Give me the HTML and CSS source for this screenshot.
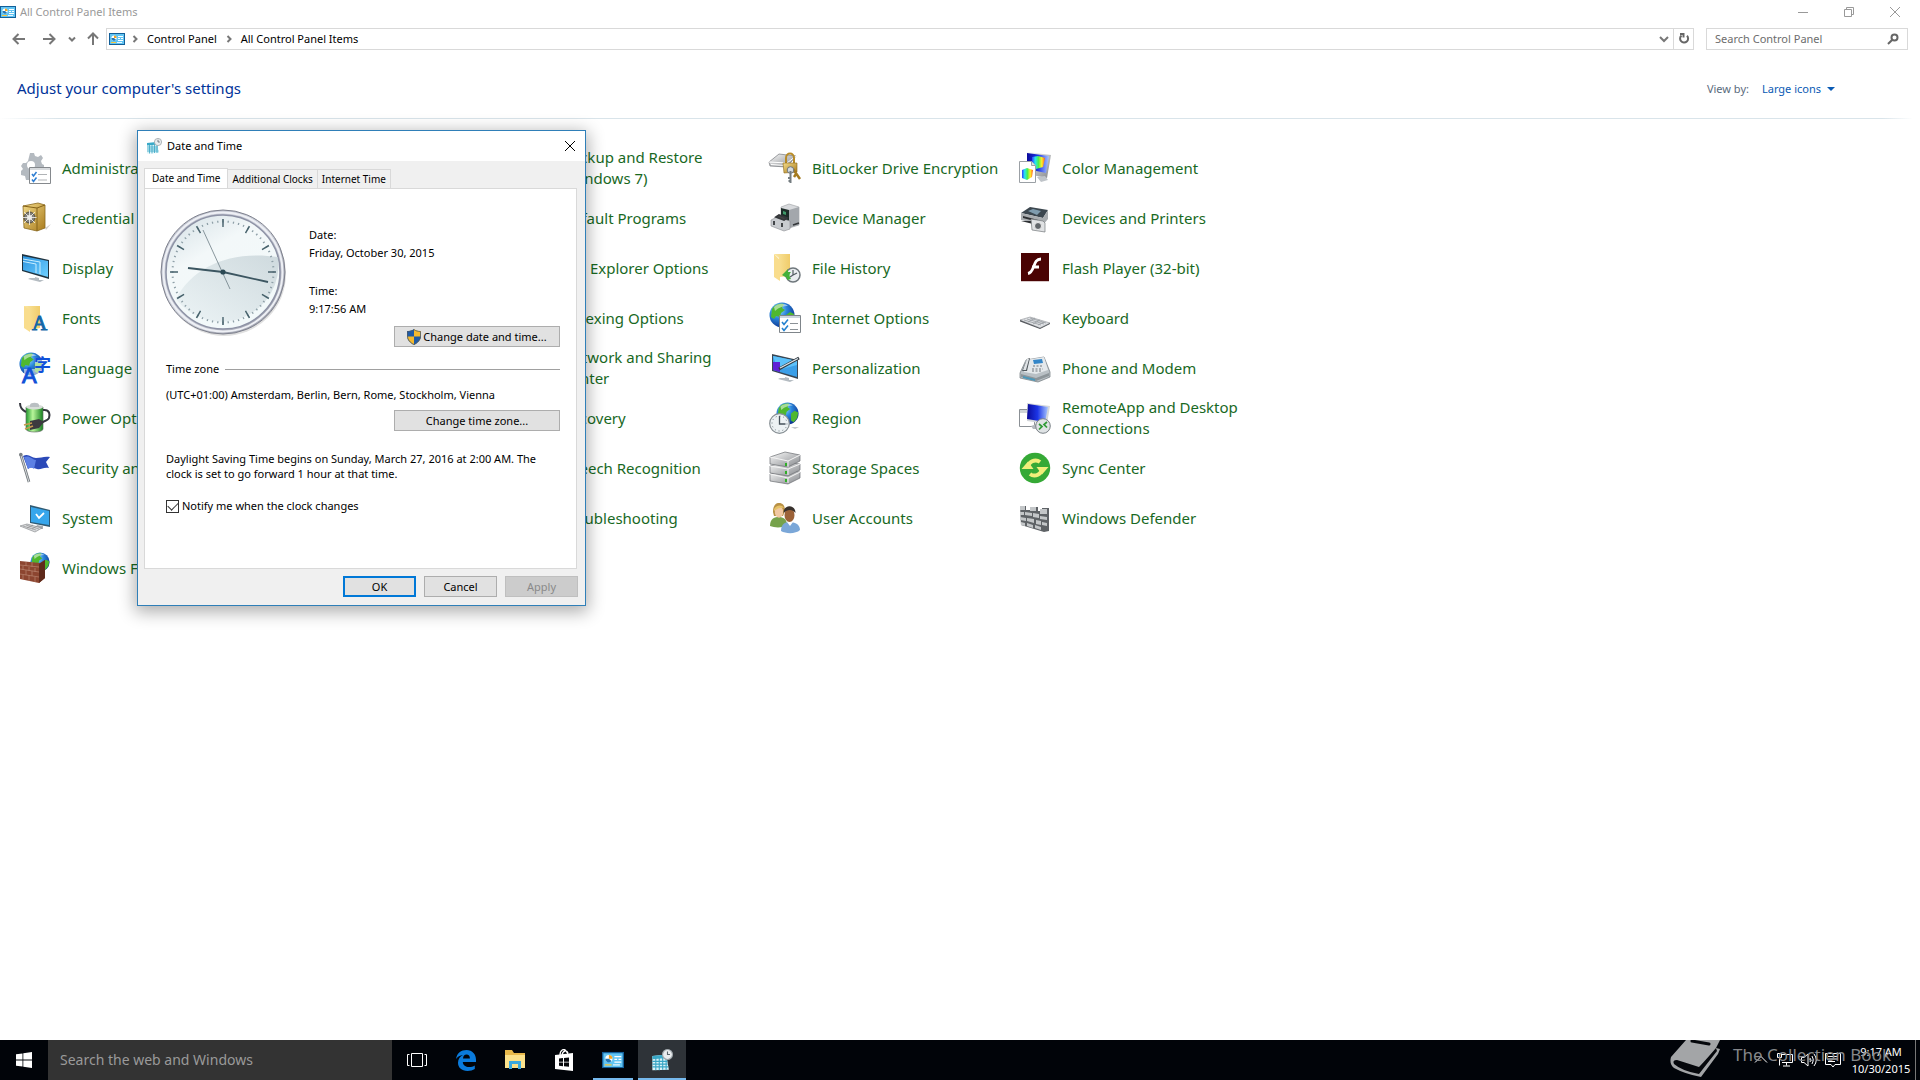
FILE: index.html
```html
<!DOCTYPE html>
<html lang="en">
<head>
<meta charset="utf-8">
<title>All Control Panel Items</title>
<link rel="stylesheet" href="styles.css">
</head>
<body>
<svg class="defs" aria-hidden="true">
  <defs>
    <radialGradient id="globe" cx="35%" cy="30%" r="75%"><stop offset="0" stop-color="#9fe4ff"/><stop offset=".45" stop-color="#2a86dc"/><stop offset="1" stop-color="#0b2f8c"/></radialGradient>
    <linearGradient id="screen" x1="0" y1="0" x2="1" y2="1"><stop offset="0" stop-color="#2b93e0"/><stop offset="1" stop-color="#6fd0ff"/></linearGradient>
    <linearGradient id="deep" x1="0" y1="0" x2="1" y2="0"><stop offset="0" stop-color="#0a0a9a"/><stop offset=".5" stop-color="#1c35e6"/><stop offset="1" stop-color="#a9c6ff"/></linearGradient>
    <linearGradient id="gold" x1="0" y1="0" x2="1" y2="1"><stop offset="0" stop-color="#f4dc8a"/><stop offset="1" stop-color="#a87a1c"/></linearGradient>
    <linearGradient id="folder" x1="0" y1="0" x2="1" y2="0"><stop offset="0" stop-color="#fbe7a3"/><stop offset="1" stop-color="#f0cc6a"/></linearGradient>
    <linearGradient id="silver" x1="0" y1="0" x2="1" y2="1"><stop offset="0" stop-color="#fafafa"/><stop offset="1" stop-color="#85888c"/></linearGradient>
    <linearGradient id="green" x1="0" y1="0" x2="1" y2="0"><stop offset="0" stop-color="#1f9a2c"/><stop offset=".4" stop-color="#b8f59a"/><stop offset="1" stop-color="#16801f"/></linearGradient>
    <linearGradient id="rainbow" x1="0" y1="0" x2="1" y2="0"><stop offset="0" stop-color="#2f3cff"/><stop offset=".25" stop-color="#28e6f0"/><stop offset=".5" stop-color="#4cf04c"/><stop offset=".75" stop-color="#fff02a"/><stop offset="1" stop-color="#ff5a1e"/></linearGradient>
    <linearGradient id="face" x1="0" y1="0" x2=".6" y2="1"><stop offset="0" stop-color="#d3dfe4"/><stop offset=".4" stop-color="#f3f8f9"/><stop offset="1" stop-color="#f2f9fa"/></linearGradient>
    <linearGradient id="shine" x1="0" y1="1" x2="1" y2="0"><stop offset="0" stop-color="#eaf2f4"/><stop offset="1" stop-color="#c3d0d5"/></linearGradient>
    <linearGradient id="rim" x1="0" y1="0" x2="1" y2="1"><stop offset="0" stop-color="#b9bdca"/><stop offset=".5" stop-color="#cfd2dc"/><stop offset="1" stop-color="#8f92a0"/></linearGradient>
    <symbol id="i-world" viewBox="0 0 26 26"><circle cx="13" cy="13" r="12.5" fill="url(#globe)"/><path d="M3 7c3-5 8-6 12-5l-2 4 3 2-4 3-1 4-4-1-2 3-3-2zM17 13l4-3 4 2-1 6-4 5-3-2z" fill="#4fb82e"/><path d="M5 5c4-4 11-4 14-1-4 0-9 1-13 5z" fill="#fff" opacity=".5"/></symbol>
    <symbol id="i-panel" viewBox="0 0 16 12"><path d="M0 0h16v12H0z" fill="#135f99"/><path d="M1 1h14v10H1z" fill="#62c5f3"/><circle cx="5" cy="5" r="2.6" fill="#fff"/><path d="M5 5V2.4A2.6 2.6 0 0 1 7.6 5z" fill="#f7a21b"/><path d="M5 5H2.4A2.6 2.6 0 0 0 7 6.800z" fill="#2477b5"/><path d="M9 3h5v1H9zM9 5h2v1H9zM12 5h2v1h-2zM9 7h5v1H9z" fill="#fff"/><path d="M2 9h5v1H2z" fill="#f7c53b"/><path d="M8 9h5v1H8z" fill="#e9f7ff"/></symbol>
    <symbol id="i-datetime" viewBox="0 0 16 16"><path d="M1 5l10-1 2 11-12 .5z" fill="#d9f3f8"/><path d="M1 5l10-1 .4 2.500L1 7.500z" fill="#3aa9c8"/><path d="M1 9h11M1 11h11M1 13h11.500M3.500 6v9.500M6 6v9.500M8.500 6v9M11 6v9" stroke="#38a5c4" stroke-width=".8"/><circle cx="12" cy="4" r="3.600" fill="#e9ecee" stroke="#9da5aa" stroke-width=".8"/><path d="M12 1.800V4h1.800" fill="none" stroke="#59636b" stroke-width=".8"/></symbol>
  </defs>
</svg>

<main class="window">
  <header class="titlebar">
    <svg class="mini" viewBox="0 0 16 12"><use href="#i-panel"/></svg>
    <span class="caption">All Control Panel Items</span>
    <div class="controls">
      <button aria-label="Minimize"><svg viewBox="0 0 12 12"><path d="M1 6.500h10"/></svg></button>
      <button aria-label="Restore"><svg viewBox="0 0 12 12"><path d="M1.500 3.500h7v7h-7zM3.500 3.500v-2h7v7h-2"/></svg></button>
      <button aria-label="Close"><svg viewBox="0 0 12 12"><path d="M1 1l10 10M11 1L1 11"/></svg></button>
    </div>
  </header>

  <nav class="navbar" aria-label="Address">
    <button class="nav-button" aria-label="Back"><svg viewBox="0 0 14 14"><path d="M13 7H2M6.500 2L1.500 7l5 5"/></svg></button>
    <button class="nav-button nav-forward" aria-label="Forward"><svg viewBox="0 0 14 14"><path d="M1 7h11M7.500 2l5 5-5 5"/></svg></button>
    <button class="nav-button nav-history" aria-label="Recent locations"><svg viewBox="0 0 14 14"><path d="M4 5.500l3 3 3-3"/></svg></button>
    <button class="nav-button nav-up" aria-label="Up"><svg viewBox="0 0 14 14"><path d="M7 13V2M2 6.500l5-5 5 5"/></svg></button>
    <div class="address">
      <svg class="mini" viewBox="0 0 16 12"><use href="#i-panel"/></svg>
      <svg class="sep" viewBox="0 0 6 8"><path d="M1.500 1l3 3-3 3"/></svg>
      <a href="#">Control Panel</a>
      <svg class="sep" viewBox="0 0 6 8"><path d="M1.500 1l3 3-3 3"/></svg>
      <a href="#">All Control Panel Items</a>
      <button class="address-drop" aria-label="Previous locations"><svg viewBox="0 0 10 10"><path d="M1 3l4 4 4-4"/></svg></button>
      <button class="refresh" aria-label="Refresh"><svg viewBox="0 0 12 12"><path d="M9 2.800A4 4 0 1 1 3.500 2.500M2 1h3.500v3.500"/></svg></button>
    </div>
    <label class="search">
      <input type="search" placeholder="Search Control Panel" aria-label="Search Control Panel">
      <svg viewBox="0 0 12 12"><circle cx="7.500" cy="4.500" r="3"/><path d="M5.300 6.700L1 11"/></svg>
    </label>
  </nav>

  <div class="heading">
    <h1>Adjust your computer's settings</h1>
    <div class="viewby"><span>View by:</span><button>Large icons<i class="caret"></i></button></div>
  </div>

  <div class="items">
    <a class="item" href="#"><svg viewBox="0 0 32 32"><path d="M11 1l4 0 1 3 3 1 3-2 2 3-2 3 1 3 2 1v4l-3 1-2 3 1 3-3 2-3-2-4 1-1 3H7l-1-4-4-1 0-4 2-2-2-3 2-3 3 0 2-2z" fill="#b4bac0"/><circle cx="12" cy="13" r="4" fill="#fff"/><path d="M10.500 15.500h21v16h-21z" fill="#fff" stroke="#85898d"/><path d="M11 16h20v2H11z" fill="#d8dbde"/><path d="M13 22l1.500 2 3-4M13 27.500l1.500 2 3-4" fill="none" stroke="#2d7dd2" stroke-width="1.500"/><path d="M19 22.500h9M19 28h9" stroke="#b0b3b6"/></svg><span>Administrative Tools</span></a>
    <a class="item" href="#"><i></i><span>Backup and Restore<br>(Windows 7)</span></a>
    <a class="item" href="#"><svg viewBox="0 0 32 32"><path d="M0 10l10-8 17 2-9 11L1 14z" fill="url(#silver)" stroke="#75787c" stroke-width=".7"/><path d="M0 10l18 1 9-7M2 12.500l14 1" stroke="#fff" fill="none"/><path d="M17 12V6c0-6 8-6 8 0v6" fill="none" stroke="#b88b27" stroke-width="2"/><path d="M14 11h14v9l-13 1z" fill="url(#gold)" stroke="#8b6718" stroke-width=".6"/><path d="M24 17l7 10M27 22l-2 3" stroke="#a57b20" stroke-width="2.500"/><circle cx="21.500" cy="18" r="3.300" fill="#d5dadd" stroke="#6e767a"/><path d="M21.500 19v12M21.500 26h-2.500M21.500 29h-2" stroke="#747c80" stroke-width="2"/></svg><span>BitLocker Drive Encryption</span></a>
    <a class="item" href="#"><svg viewBox="0 0 32 32"><path d="M8 0l24 3-4 23-20-4z" fill="url(#silver)"/><path d="M8 1l22 3-3 17-19-4z" fill="url(#deep)"/><path d="M13 5l6-1 7 2-2 9-7 2-4-2z" fill="url(#rainbow)"/><path d="M18 25l8-1 3 4-7 2z" fill="#bfc4c9"/><path d="M.5 9.500h12l4 4v17H.5z" fill="#fff" stroke="#9ba0a5"/><path d="M3 18l5-2 6 2-1 7-5 3-5-2z" fill="url(#rainbow)"/><path d="M12.500 9.500v4h4" fill="#dfe3e6" stroke="#9ba0a5"/></svg><span>Color Management</span></a>

    <a class="item" href="#"><svg viewBox="0 0 32 32"><path d="M26 26l6-4-5 6z" fill="#cfcfcf"/><path d="M4 4l15-3 7 2v23l-8 3L5 26z" fill="url(#gold)" stroke="#8a6920" stroke-width=".8"/><path d="M4 4l14 2 8-3M18 6v23" fill="none" stroke="#846219"/><circle cx="10.500" cy="15.500" r="5.500" fill="#83807a" stroke="#4c4a45"/><circle cx="10.500" cy="15.500" r="2.500" fill="#eee"/><path d="M10.500 8v15M3.500 15.500h14M5 10l11 11M16 10L5 21" stroke="#ecebe6" stroke-width=".9"/></svg><span>Credential Manager</span></a>
    <a class="item" href="#"><i></i><span>Default Programs</span></a>
    <a class="item" href="#"><svg viewBox="0 0 32 32"><path d="M12 5l8-3 10 3v18l-10 3-8-3z" fill="#d8dadd" stroke="#9a9da1" stroke-width=".6"/><path d="M20 8l10-3v18l-10 3z" fill="#a3a7ac"/><path d="M12 6l8 2v12l-8-3z" fill="#1d2c28"/><path d="M14 9l3 1v3l-3-1z" fill="#3f9a6a"/><path d="M2 18l6-3 13 4v8l-6 2-13-5z" fill="#c9ccd0" stroke="#898c90" stroke-width=".6"/><path d="M7 15l3-2 8 3-3 2zM5 19v4M13 21v4M24 23l6-2" stroke="#34373a" stroke-width="1.800" fill="#444"/></svg><span>Device Manager</span></a>
    <a class="item" href="#"><svg viewBox="0 0 32 32"><path d="M2 11l9-6 18 3-5 8z" fill="#3c474f"/><path d="M9 9l5-2 8 2-4 4z" fill="#7f9cae"/><path d="M2 11l22 5 5-8v9l-5 6-22-5z" fill="#a9adb0"/><path d="M4 14l15 4v2L4 16zM2 19h12v3z" fill="#2d3033"/><path d="M12 17l12 2 2 2v9l-13-2z" fill="#e0e2e4" stroke="#74787b" stroke-width=".7"/><circle cx="19" cy="24" r="3.500" fill="#62676b" stroke="#ececec"/></svg><span>Devices and Printers</span></a>

    <a class="item" href="#"><svg viewBox="0 0 32 32"><path d="M3 2l27 6v19L3 19z" fill="#20323e"/><path d="M4 4l25 5v16L4 18z" fill="url(#screen)"/><path d="M4 7l17 3v12M4 9.500l13 2.500v9" fill="none" stroke="#c9eeff"/><path d="M16 25l4 1v2h5l-4 2-12-3 2-1h5z" fill="#b5bcc2"/></svg><span>Display</span></a>
    <a class="item" href="#"><i></i><span>File Explorer Options</span></a>
    <a class="item" href="#"><svg viewBox="0 0 32 32"><path d="M5 2h16v22l-11 1V6z" fill="url(#folder)"/><path d="M5 2l6 6v21l-6-4z" fill="#f9dd8d"/><circle cx="24" cy="23" r="7" fill="#e9edf0" stroke="#6f777c" stroke-width="1.500"/><path d="M24 18v5l4-2M24 23l-3 2" stroke="#515b61" fill="none" stroke-width="1.200"/><path d="M13 23l6-6v3h3c-2 2-2 4 0 7l-4 1v-2z" fill="#43b03b"/></svg><span>File History</span></a>
    <a class="item" href="#"><svg viewBox="0 0 32 32"><path d="M2 29h28v1H2z" fill="#d9c9c9"/><path d="M2 1h28v28H2z" fill="#4a0303"/><path d="M22 7c-5 0-6 4-7.500 8C13 19 12 21 9 21.500M13 15h7" fill="none" stroke="#fff" stroke-width="2.800"/></svg><span>Flash Player (32-bit)</span></a>

    <a class="item" href="#"><svg viewBox="0 0 32 32"><path d="M5 4h16v22l-10 2z" fill="url(#folder)"/><path d="M5 4l6 4v22l-6-4z" fill="#f9dd8d"/><text x="13" y="28" class="font-glyph">A</text></svg><span>Fonts</span></a>
    <a class="item" href="#"><i></i><span>Indexing Options</span></a>
    <a class="item" href="#"><svg viewBox="0 0 32 32"><use href="#i-world" width="26" height="26"/><path d="M10.500 13.500h21v17h-21z" fill="#fff" stroke="#7f858a"/><path d="M11 14h20v2H11z" fill="#ccd6df"/><path d="M13 20l2 2.500 4-5M13 26l2 2.500 4-5" fill="none" stroke="#2482d0" stroke-width="1.600"/><path d="M21 21.500h8M21 27.500h8" stroke="#8b9196"/></svg><span>Internet Options</span></a>
    <a class="item" href="#"><svg viewBox="0 0 32 32"><path d="M1 18l10-3 20 6-10 5z" fill="#dfe1e4" stroke="#8b8e93" stroke-width=".6"/><path d="M5 18l17 5M8 17l17 5M11 16l16 5M9 20l7-4M14 22l7-4M19 23l6-3" stroke="#969a9f" stroke-width=".8"/><path d="M1 18v1.500l20 7.500 10-5v-1l-10 5z" fill="#54585d"/></svg><span>Keyboard</span></a>

    <a class="item" href="#"><svg viewBox="0 0 32 32"><use href="#i-world" width="24" height="24"/><path d="M16 6h16v13H20v12H5V17h11z" fill="#fff" opacity=".55"/><text x="15" y="19" class="cjk-glyph">字</text><text x="3" y="31" class="latin-glyph">A</text></svg><span>Language</span></a>
    <a class="item" href="#"><i></i><span>Network and Sharing<br>Center</span></a>
    <a class="item" href="#"><svg viewBox="0 0 32 32"><path d="M3 2l26 6v19L3 19z" fill="#3a4652"/><path d="M4 4l24 5v16L4 18z" fill="#3b9fe8"/><path d="M4 4l24 5v4L9 18z" fill="#5cc1fa"/><path d="M4 10h7v10l-7-2z" fill="#5f1fd6"/><path d="M10 17L30 6" stroke="#303940" stroke-width="3"/><path d="M11 16L29 6.500" stroke="#dce4ea" stroke-width="1.400"/><path d="M16 25l4 1v2h5l-4 2-12-3 2-1h5z" fill="#b5bcc2"/></svg><span>Personalization</span></a>
    <a class="item" href="#"><svg viewBox="0 0 32 32"><path d="M1 21l6-13 18-3 6 15v5l-12 5L1 26z" fill="#b9c0c5" stroke="#6f777c" stroke-width=".7"/><path d="M7 8l18-3 4 13-12 4-12-2z" fill="#e4e8eb"/><path d="M14 8l9-1 1 4-9 1z" fill="#3486c8"/><path d="M3 19l5-12 3-1-3 13z" fill="#50575c"/><path d="M4 18l4-11 2 0-3 11z" fill="#dfe3e6"/><path d="M14 14h9M13 17h11M13 19h9" stroke="#70777c" stroke-dasharray="2 1.500"/><path d="M2 22l15 4 13-5v3l-13 5-15-4z" fill="#8d959a"/><path d="M4 24l12 3v2L4 26z" fill="#4c98ba"/></svg><span>Phone and Modem</span></a>

    <a class="item" href="#"><svg viewBox="0 0 32 32"><path d="M7 5h17v22c0 4-17 4-17 0z" fill="url(#green)" stroke="#6a716c" stroke-width=".7"/><ellipse cx="15.500" cy="5" rx="8.500" ry="2.500" fill="#d7ddd8"/><path d="M11 3c0-3 9-3 9 0v2h-9z" fill="#b9bfc2"/><path d="M1 1c0 5 2 7 6 9M24 8c7-1 7 5 6 8s-6 3-8 5" fill="none" stroke="#35373f" stroke-width="2"/><path d="M11 19l9-2 5 3-5 6-9 2z" fill="#3c3a3f"/><path d="M5 23l8-2M6 27l8-3" stroke="#c69b4d" stroke-width="1.800"/></svg><span>Power Options</span></a>
    <a class="item" href="#"><i></i><span>Recovery</span></a>
    <a class="item" href="#"><svg viewBox="0 0 32 32"><path d="M22 25h8l-4 2z" fill="#c4c9cc"/><use href="#i-world" x="7" width="23" height="23"/><circle cx="10.500" cy="21.500" r="9.800" fill="#edf2f4" stroke="#878f94" stroke-width="1.200"/><path d="M10.500 14v8h6" fill="none" stroke="#46515a" stroke-width="1.300"/><circle cx="10.500" cy="21.500" r="7.500" fill="none" stroke="#6e7a82" stroke-dasharray="1 2.900"/></svg><span>Region</span></a>
    <a class="item" href="#"><svg viewBox="0 0 32 32"><path d="M.5 7.500h15v17H.5z" fill="#fff" stroke="#8b9095"/><path d="M1 8h14v3H1z" fill="#cfd4d8"/><path d="M8 1l23 3-3 18-20-3z" fill="#d3d6da"/><path d="M9 2l20 3-3 15-18-3z" fill="url(#deep)"/><path d="M12 24l8-3 2 6h-8z" fill="#b4b9be"/><circle cx="24" cy="24" r="7.300" fill="#dfe3e5" stroke="#7b8287"/><path d="M20 22l3 2.500-3 3M28 20l-3 2.500 3 3" fill="none" stroke="#2f9a36" stroke-width="1.700"/></svg><span>RemoteApp and Desktop<br>Connections</span></a>

    <a class="item" href="#"><svg viewBox="0 0 32 32"><path d="M4 4c6-3 8 2 13 2s8-2 14-1l-4 5 3 6c-6-1-8 2-12 1s-5-3-9 0z" fill="#2b49b8"/><path d="M5 5c6-2 7 2 12 3l-2 9c-3-2-4-1-6 0z" fill="#5c80e4"/><path d="M1.500 2l8.500 28" stroke="#72787c" stroke-width="2.600"/><path d="M1.500 2l8.500 28" stroke="#d7dbde"/><circle cx="1.800" cy="2.500" r="1.800" fill="#7c8286"/></svg><span>Security and Maintenance</span></a>
    <a class="item" href="#"><i></i><span>Speech Recognition</span></a>
    <a class="item" href="#"><svg viewBox="0 0 32 32"><g stroke="#6b6e72" stroke-width=".7" fill="url(#silver)"><path d="M1 22l14-4 16 2v6l-12 6-18-3z"/><path d="M1 14l14-4 16 2v6l-12 6-18-3z"/><path d="M1 5l15-5 15 3v6l-12 6-18-3z"/></g><path d="M1 5l18 4 12-6M19 9v6M1 14l18 3 12-5M19 17v6M1 22l18 4 12-6M19 26v5" fill="none" stroke="#f4f4f4"/><path d="M16 11h2v3h-2zM16 19h2v3h-2zM16 27h2v3h-2z" fill="#2faf26"/></svg><span>Storage Spaces</span></a>
    <a class="item" href="#"><svg viewBox="0 0 32 32"><circle cx="16" cy="16" r="15.200" fill="#35a936"/><path d="M9 16a7.500 7.500 0 0 1 12-6M23 16a7.500 7.500 0 0 1-12 6" fill="none" stroke="#f0ee7a" stroke-width="4"/><path d="M2.500 17L9 9.500l5.500 7.500zM29.500 15L23 22.500 17.500 15z" fill="#f0ee7a"/></svg><span>Sync Center</span></a>

    <a class="item" href="#"><svg viewBox="0 0 32 32"><path d="M11 3l20 5v17l-20-4z" fill="#2f5a73"/><path d="M12 5l18 4v14l-18-3z" fill="#37a6ec"/><path d="M17 12l3 4 5-5" fill="none" stroke="#fff" stroke-width="1.800"/><path d="M18 23l6 1v3h-7z" fill="#a9aeb2"/><path d="M1 24l7-2 15 4-7 4z" fill="#dadcde" stroke="#8c8f92" stroke-width=".7"/><path d="M4 24l13 4M7 23l13 4M8 26l6-3M13 27l5-3" stroke="#888" stroke-width=".6"/></svg><span>System</span></a>
    <a class="item" href="#"><i></i><span>Troubleshooting</span></a>
    <a class="item" href="#"><svg viewBox="0 0 32 32"><path d="M1 24c0-8 5-9 9-9s8 2 8 8c-4 3-12 3-17 1z" fill="#76a24b"/><path d="M4 10c0-7 3-9 6-9 4 0 6 3 6 8l-2 5H5z" fill="#b99145"/><ellipse cx="10" cy="10" rx="4.200" ry="5.800" fill="#f1c8a3"/><path d="M5 7c2-4 8-5 10-1-3-1-6 0-10 3z" fill="#e6c268"/><path d="M12 29c0-8 5-9 9-9s10 2 10 8c-4 4-14 4-19 1z" fill="#7ba7d8"/><ellipse cx="20.500" cy="13" rx="5" ry="7" fill="#9c6238"/><path d="M14.500 11c0-9 12-9 12 0-3-4-8-4-12 0z" fill="#38312d"/><path d="M18 20l3 4 3-4" fill="#fff"/></svg><span>User Accounts</span></a>
    <a class="item" href="#"><svg viewBox="0 0 32 32"><path d="M1 4h6v4h5V5h7v4h4V6h7v23l-5 1L2 23z" fill="#5e6266"/><g fill="#c3c6c8"><path d="M1 4h5v4H1zM11 5h6v4h-6zM21 7h7v5h-7zM1 10h4v3H1zM6 10l7 1v3l-7-1zM14 11l6 1v4l-6-1zM21 14l7 1v3l-7-1zM1 15l6 1v3l-6-1zM8 16l7 1v4l-7-2zM17 18l5 1v4l-5-1zM23 20l5 1v3l-5-1zM2 20l4 1v3l-4-1zM8 21l6 2v3l-6-2zM16 23l6 2v3l-6-2z"/></g></svg><span>Windows Defender</span></a>

    <a class="item" href="#"><svg viewBox="0 0 32 32"><use href="#i-world" x="11" width="20" height="20"/><path d="M1 9l20 2 5-3v18l-6 5-19-4z" fill="#8c4530"/><path d="M20 12l6-4v18l-6 5z" fill="#5f2a1b"/><path d="M1 13l19 2M1 17l19 3M1 22l19 3M7 10v4M13 10v5M4 14v4M10 15v4M16 16v4M7 18v5M13 19v5M4 23v4M10 23v6M16 25v5" fill="none" stroke="#b98570" stroke-width=".7"/></svg><span>Windows Firewall</span></a>
  </div>
</main>

<section class="dialog" role="dialog" aria-label="Date and Time">
  <header class="dialog-title">
    <svg class="dialog-icon" viewBox="0 0 16 16"><use href="#i-datetime"/></svg>
    <span>Date and Time</span>
    <button aria-label="Close"><svg viewBox="0 0 12 12"><path d="M1 1l10 10M11 1L1 11"/></svg></button>
  </header>
  <div class="tabs" role="tablist">
    <button class="tab selected" role="tab" aria-selected="true">Date and Time</button>
    <button class="tab" role="tab">Additional Clocks</button>
    <button class="tab" role="tab">Internet Time</button>
  </div>
  <div class="panel" role="tabpanel">
    <div class="now">
      <svg class="clock" viewBox="-64 -64 128 128" role="img" aria-label="9:17:56">
        <circle cx="1" cy="2" r="62" fill="#000" opacity=".12"/>
        <circle r="62" fill="url(#rim)" stroke="#7d808c"/>
        <circle r="59.500" fill="none" stroke="#eef0f5" stroke-width="2"/>
        <circle r="57" fill="url(#face)" stroke="#8d92a5" stroke-width="1.500"/>
        <path d="M-47 27C-30-6 8-22 55-15A57 57 0 0 1-47 27z" fill="url(#shine)" opacity=".75"/>
        <circle r="50.500" class="minutes" pathLength="60"/>
        <circle r="49" class="hours" pathLength="120"/>
        <path d="M-35-4L0 0" stroke="#3c5661" stroke-width="1.800"/>
        <path d="M0 0l45 10" stroke="#3c5661" stroke-width="1.800"/>
        <path d="M-20-42L7 17" stroke="#6d7d85" stroke-width=".8"/>
        <circle r="2.600" fill="#2b4954"/>
      </svg>
      <dl>
        <dt>Date:</dt><dd>Friday, October 30, 2015</dd>
        <dt>Time:</dt><dd>9:17:56 AM</dd>
      </dl>
    </div>
    <button class="push wide"><svg class="shield" viewBox="0 0 14 16"><path d="M7 0c2 1.500 4 2 7 2v5c0 4-3 7-7 9z" fill="#f5b92e"/><path d="M7 0C5 1.500 3 2 0 2v5c0 4 3 7 7 9z" fill="#1f5aa6"/><path d="M0 7.500h7V16C3 14 .4 11 0 7.500z" fill="#f5b92e"/><path d="M14 7.500H7V16c4-2 6.600-5 7-8.500z" fill="#1f5aa6"/><path d="M7 .6c2 1.400 4 1.900 6.500 1.900V7c0 4-3 6.700-6.500 8.500C3.500 13.700.5 11 .5 7V2.500C3 2.500 5 2 7 .6z" fill="none" stroke="#4b5b6a" stroke-width=".8"/></svg>Change date and time...</button>
    <h2 class="group">Time zone</h2>
    <p class="zone">(UTC+01:00) Amsterdam, Berlin, Bern, Rome, Stockholm, Vienna</p>
    <button class="push wide">Change time zone...</button>
    <p class="dst">Daylight Saving Time begins on Sunday, March 27, 2016 at 2:00 AM. The<br>clock is set to go forward 1 hour at that time.</p>
    <label class="notify"><input type="checkbox" checked>Notify me when the clock changes</label>
  </div>
  <footer class="actions">
    <button class="push default">OK</button>
    <button class="push">Cancel</button>
    <button class="push" disabled>Apply</button>
  </footer>
</section>

<footer class="taskbar">
  <button class="start" aria-label="Start"><svg viewBox="0 0 16 16"><path d="M0 2.300L6.500 1.400v6.200H0zM7.300 1.300L16 0v7.600H7.300zM0 8.400h6.500v6.200L0 13.700zM7.300 8.400H16V16l-8.700-1.300z" fill="#fff"/></svg></button>
  <input class="cortana" type="search" placeholder="Search the web and Windows" aria-label="Search the web and Windows">
  <div class="apps">
    <button aria-label="Task View"><svg viewBox="0 0 22 22" fill="none" stroke="#fff"><path d="M5.500 4.500h11v13h-11zM3.500 5.500h-2v11h2M18.500 5.500h2v11h-2"/></svg></button>
    <button aria-label="Microsoft Edge"><svg viewBox="0 0 22 22"><path d="M1 10C2 4 6 1 11.500 1c6 0 9.500 4.500 9.500 9.500V13H7.800c.2 3.500 3 5 6.200 5 2.300 0 4.200-.6 5.800-1.600V20c-2 1.200-4.300 2-7.300 2C6.500 22 3 18.500 3 13.800 3 10 5 7.300 8 6c-3 .3-5.500 1.800-7 4zm7-.6h6.900c0-2.500-1.200-4-3.400-4C9.400 5.400 8.200 7 8 9.400z" fill="#0a7bdc"/></svg></button>
    <button aria-label="File Explorer"><svg viewBox="0 0 22 22"><path d="M1 1h7l2 3h11v15H1z" fill="#e8b94b"/><path d="M1 6h20v13H1z" fill="#fbe18a"/><path d="M5 12h12v8h-3v-5H8v5H5z" fill="#3aa9e0"/></svg></button>
    <button aria-label="Store"><svg viewBox="0 0 22 22"><path d="M7 6C7 1 11-1 13 2l2 3M9 6c1-5 5-5 6-2" fill="none" stroke="#fff" stroke-width="1.300"/><path d="M2 6l18-2v18L2 20z" fill="#fff"/><path d="M6 9.500l4-.4v3.600H6zM11 9l5-.5v4.200h-5zM6 13.600h4v3.600l-4-.4zM11 13.600h5v4.200l-5-.5z" fill="#05070b"/></svg></button>
    <button class="running" aria-label="Control Panel"><svg viewBox="0 -2 16 16"><use href="#i-panel" width="16" height="12"/></svg></button>
    <button class="running active" aria-label="Date and Time"><svg viewBox="0 0 16 16"><use href="#i-datetime"/></svg></button>
  </div>
  <div class="tray">
    <button aria-label="Show hidden icons"><svg viewBox="0 0 16 16"><path d="M2 10.500l6-6 6 6"/></svg></button>
    <button aria-label="Network"><svg viewBox="0 0 16 16"><path d="M4 2.500h11.500v8H5M9.500 10.500v3M6 14h7M.5 1.500h4v4h-4zM2.500 5.500v8"/></svg></button>
    <button aria-label="Volume"><svg viewBox="0 0 16 16"><path d="M.5 5.500h2.500l4-3.500v12l-4-3.500H.5zM9 6q1.500 2 0 4M11 4q3 4 0 8M13 2q4.500 6 0 12"/></svg></button>
    <button aria-label="Notifications"><svg viewBox="0 0 16 16"><path d="M.5 1.500h15v11H10l-2 2.500-2-2.500H.5zM3 4.500h10M3 7h10M3 9.500h7"/></svg></button>
    <time datetime="2015-10-30T09:17">9:17 AM<br>10/30/2015</time>
    <button class="peek" aria-label="Show desktop"></button>
  </div>
  <div class="watermark">
    <svg viewBox="0 0 52 38"><path d="M16 0h34l-4 8 4 1-2 5-17 23Q15 34 4 28-1 24 1 17z" fill="#a3a5a7"/><path d="M4 24q-2-4 3-4l22 7q5-5 17-19l1 3L29 34Q12 31 4 24z" fill="#05070b"/><path d="M22 1l17 3" stroke="#05070b" stroke-width="3" stroke-linecap="round"/></svg>
    <span>The Collection Book</span>
  </div>
</footer>
</body>
</html>
```
FILE: styles.css
```css
* { box-sizing: border-box; }

body {
  margin: 0;
  min-height: 100vh;
  display: flex;
  flex-direction: column;
  position: relative;
  background: #fff;
  color: #000;
  font-family: "Noto Sans", "Open Sans", "Noto Sans CJK SC", sans-serif;
  font-size: 11px;
  line-height: 16px;
}

button, input { font: inherit; color: inherit; }
button { border: 0; padding: 0; background: none; }
a { color: inherit; text-decoration: none; }
h1, h2, p, dl, dd { margin: 0; font-weight: normal; }
svg { display: block; flex: none; }
.defs { position: absolute; width: 0; height: 0; }

.window { flex: 1; display: flex; flex-direction: column; }

.titlebar { display: flex; align-items: center; height: 24px; gap: 4px; }
.mini { width: 16px; height: 12px; }
.caption { color: #999; flex: 1; }
.controls { display: flex; align-items: center; height: 20px; }
.controls button { width: 46px; display: flex; justify-content: center; }
.controls button:last-child { margin-right: 2px; }
.controls svg { width: 12px; height: 12px; fill: none; stroke: #999; }

.navbar { display: flex; align-items: center; margin-top: 4px; padding: 0 12px; height: 22px; }
.nav-button { width: 14px; margin-right: 16px; }
.nav-button svg { width: 14px; height: 14px; fill: none; stroke: #777; stroke-width: 2; }
.nav-forward { margin-right: 9px; }
.nav-history { margin-right: 7px; }
.nav-up { margin-right: 6px; }
.address { flex: 1; height: 22px; display: flex; align-items: center; border: 1px solid #d9d9d9; padding-left: 2px; }
.sep { width: 6px; height: 8px; margin: 0 9px 0 7px; fill: none; stroke: #777; stroke-width: 2; }
.address a + .sep { margin: 0 9px; }
.address-drop { margin-left: auto; padding-right: 4px; }
.address-drop svg { width: 10px; height: 10px; fill: none; stroke: #777; stroke-width: 2; }
.refresh { width: 20px; height: 20px; border-left: 1px solid #d9d9d9; display: flex; justify-content: center; align-items: center; }
.refresh svg { width: 12px; height: 12px; fill: none; stroke: #666; stroke-width: 2; }
.search { width: 202px; height: 22px; margin-left: 12px; display: flex; align-items: center; border: 1px solid #d9d9d9; padding: 0 8px; }
.search input { flex: 1; min-width: 0; border: 0; padding: 0; outline: 0; background: none; }
.search input::placeholder { color: #6d6d6d; }
.search svg { width: 12px; height: 12px; fill: none; stroke: #666; stroke-width: 2; }

.heading { height: 69px; margin-right: 8px; display: flex; justify-content: space-between; align-items: center; padding: 8px 77px 0 17px; border-bottom: 1px solid; border-image: linear-gradient(90deg, #fff, #d9e4ea 60px, #d9e4ea calc(100% - 30px), #fff) 1; }
.heading h1 { font-size: 15px; line-height: 20px; color: #039; }
.viewby { display: flex; gap: 13px; padding-top: 2px; color: #5a6a7d; }
.viewby button { display: flex; align-items: center; gap: 6px; color: #0a5ab4; }
.caret { border: 4px solid transparent; border-top-color: #0a5ab4; border-bottom: 0; }

/* The dialog stands over the second column, so each row fills columns 1, 3, 4 and 5. */
.items { display: grid; grid-template-columns: repeat(5, 250px); grid-auto-rows: 50px; padding: 24px 19px; }
.item { display: flex; align-items: center; gap: 11px; color: #19691f; font-size: 15px; line-height: 21px; white-space: nowrap; }
.item:nth-child(4n+1) { grid-column: 1; }
.item:nth-child(4n+2) { grid-column: 3; }
.item > svg, .item > i { width: 32px; height: 32px; flex: none; overflow: visible; }
.font-glyph { font: 21px "Liberation Serif", serif; fill: #1367a8; stroke: #1367a8; stroke-width: 1; }
.cjk-glyph { font: bold 17px "Noto Sans CJK SC", sans-serif; fill: #1050d8; }
.latin-glyph { font: 22px "Liberation Sans", sans-serif; fill: #1050d8; stroke: #1050d8; }

.dialog { position: absolute; left: 137px; top: 130px; width: 449px; display: flex; flex-direction: column; background: #f0f0f0; border: 1px solid #2f7fb8; box-shadow: 0 4px 16px 2px rgba(0, 0, 0, .32); }
.dialog-title { height: 30px; display: flex; align-items: center; gap: 5px; padding: 0 9px 0 8px; background: #fff; }
.dialog-title span { flex: 1; }
.dialog-title .dialog-icon { width: 16px; height: 16px; }
.dialog-title button svg { width: 12px; height: 12px; fill: none; stroke: #000; }
.tabs { display: flex; align-items: flex-end; padding: 7px 6px 0; height: 27px; font-size: 10px; }
.tab { height: 19px; line-height: 18px; padding: 0 4px; border: 1px solid #d9d9d9; border-bottom: 0; border-left: 0; background: #f0f0f0; }
.tab.selected { height: 21px; margin-bottom: -1px; padding: 0 7px 3px; background: #fff; border-left: 1px solid #d9d9d9; }
.panel { margin: 0 8px 0 6px; height: 381px; padding: 19px 16px 0 14px; display: flex; flex-direction: column; background: #fff; border: 1px solid #d9d9d9; }
.now { display: flex; gap: 22px; height: 118px; }
.clock { width: 128px; height: 128px; }
.minutes { fill: none; stroke: #8fa0a8; stroke-width: 2; stroke-dasharray: .25 .75; stroke-dashoffset: .125; }
.hours { fill: none; stroke: #47626c; stroke-width: 8; stroke-dasharray: .6 9.4; stroke-dashoffset: .3; }
.now dl { padding-top: 19px; }
.now dt { height: 18px; }
.now dd { height: 38px; }
.push { width: 73px; height: 21px; line-height: 16px; border: 1px solid #adadad; background: #e1e1e1; display: flex; align-items: center; justify-content: center; }
.push.wide { width: 166px; align-self: flex-end; flex: none; }
.shield { width: 14px; height: 16px; margin-right: 2px; }
.group { display: flex; align-items: center; gap: 6px; margin: 14px 0 0 7px; font-size: 11px; }
.group::after { content: ""; flex: 1; border-top: 1px solid #a0a0a0; }
.zone { margin: 10px 0 7px 7px; white-space: nowrap; }
.dst { margin: 20px 0 0 7px; line-height: 15px; white-space: nowrap; }
.notify { display: flex; align-items: center; gap: 3px; margin: 17px 0 0 7px; }
.notify input { appearance: none; width: 13px; height: 13px; margin: 0; border: 1px solid #333; display: grid; place-items: center; }
.notify input:checked::before { content: ""; width: 9px; height: 5px; border: solid #333; border-width: 0 0 1px 1px; transform: translateY(-1px) rotate(-45deg); }
.actions { display: flex; justify-content: flex-end; gap: 8px; padding: 7px 7px 8px; }
.push.default { border: 2px solid #0078d7; }
.push:disabled { color: #898989; background: #ccc; border-color: #bfbfbf; }

.taskbar { position: relative; height: 40px; display: flex; background: #010409; color: #fff; }
.start { width: 48px; display: flex; align-items: center; justify-content: center; }
.start svg { width: 16px; height: 16px; }
.cortana { width: 344px; border: 0; outline: 0; padding: 0 12px; background: #333; font-size: 14px; }
.cortana::placeholder { color: #9a9a9a; }
.apps { display: flex; gap: 1px; flex: 1; padding-left: 1px; }
.apps button { width: 48px; display: flex; align-items: center; justify-content: center; }
.apps svg { width: 22px; height: 22px; }
.running { box-shadow: inset 0 -2px #76b9ed; }
.apps .running:not(.active) { width: 40px; margin: 0 4px; }
.apps .active { background: #2e3338; }
.tray { display: flex; align-items: center; gap: 8px; }
.tray svg { width: 16px; height: 16px; fill: none; stroke: #fff; }
.tray time { width: 64px; text-align: center; line-height: 17px; }
.tray .peek { width: 5px; height: 40px; border-left: 1px solid #777; margin-left: -6px; }
.watermark { position: absolute; right: 29px; top: 0; display: flex; gap: 11px; color: #85878a; font-size: 17px; line-height: 30px; pointer-events: none; }
.watermark svg { width: 52px; height: 38px; }
```
